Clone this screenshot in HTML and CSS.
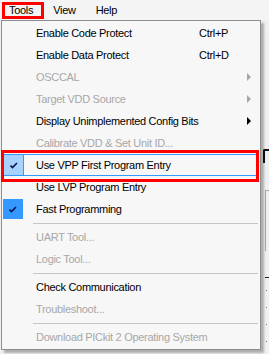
FILE: index.html
```html
<html>
    <head>
        <link rel="stylesheet" href="styles.css">
    </head>
    <body>
        <div class="behind">
            <div class="bracket"></div>
            <div class="groupBox"></div>
            <div class="rule"></div>
            <div class="dots"></div>
        </div>

        <div class="menuBar">
            <span class="barItem open">Tools</span>
            <span class="barItem">View</span>
            <span class="barItem">Help</span>
        </div>

        <div class="dropDown">
            <div class="item">
                <span class="check"></span>
                <span class="label">Enable Code Protect</span>
                <span class="keys">Ctrl+P</span>
                <span></span>
            </div>
            <div class="item">
                <span class="check"></span>
                <span class="label">Enable Data Protect</span>
                <span class="keys">Ctrl+D</span>
                <span></span>
            </div>
            <div class="item disabled">
                <span class="check"></span>
                <span class="label">OSCCAL</span>
                <span class="keys"></span>
                <span class="arrow"></span>
            </div>
            <div class="item disabled">
                <span class="check"></span>
                <span class="label">Target VDD Source</span>
                <span class="keys"></span>
                <span class="arrow"></span>
            </div>
            <div class="item">
                <span class="check"></span>
                <span class="label">Display Unimplemented Config Bits</span>
                <span class="keys"></span>
                <span class="arrow"></span>
            </div>
            <div class="item disabled">
                <span class="check"></span>
                <span class="label">Calibrate VDD &amp; Set Unit ID...</span>
                <span class="keys"></span>
                <span></span>
            </div>
            <div class="item hover marked">
                <span class="check checked">
                    <svg width="8" height="7" viewBox="0 0 8 7"><path d="M0.5 3.5 L2.5 5.5 L7 1" fill="none" stroke="#10104a" stroke-width="1.6"/></svg>
                </span>
                <span class="label">Use VPP First Program Entry</span>
                <span class="keys"></span>
                <span></span>
            </div>
            <div class="item">
                <span class="check"></span>
                <span class="label">Use LVP Program Entry</span>
                <span class="keys"></span>
                <span></span>
            </div>
            <div class="item">
                <span class="check checked">
                    <svg width="8" height="7" viewBox="0 0 8 7"><path d="M0.5 3.5 L2.5 5.5 L7 1" fill="none" stroke="#10104a" stroke-width="1.6"/></svg>
                </span>
                <span class="label">Fast Programming</span>
                <span class="keys"></span>
                <span></span>
            </div>
            <div class="separator"></div>
            <div class="item disabled">
                <span class="check"></span>
                <span class="label">UART Tool...</span>
                <span class="keys"></span>
                <span></span>
            </div>
            <div class="item disabled">
                <span class="check"></span>
                <span class="label">Logic Tool...</span>
                <span class="keys"></span>
                <span></span>
            </div>
            <div class="separator"></div>
            <div class="item">
                <span class="check"></span>
                <span class="label">Check Communication</span>
                <span class="keys"></span>
                <span></span>
            </div>
            <div class="item disabled">
                <span class="check"></span>
                <span class="label">Troubleshoot...</span>
                <span class="keys"></span>
                <span></span>
            </div>
            <div class="separator"></div>
            <div class="item disabled">
                <span class="check"></span>
                <span class="label">Download PICkit 2 Operating System</span>
                <span class="keys"></span>
                <span></span>
            </div>
        </div>
    </body>
</html>
```

FILE: styles.css
```css
body {
    margin: 0;
    width: 269px;
    height: 354px;
    overflow: hidden;
    position: relative;
    background: #f0f0f0;
    font-family: "Liberation Sans", Arial, sans-serif;
    font-size: 11px;
    letter-spacing: -0.3px;
    color: #000;
}

/* window content peeking out on the right */
.behind > div {
    position: absolute;
}
.bracket {
    left: 263px;
    top: 149px;
    width: 8px;
    height: 12px;
    border-left: 2px solid #111;
    border-top: 2px solid #111;
    border-radius: 2px 0 0 0;
}
.groupBox {
    left: 265px;
    top: 190px;
    width: 8px;
    height: 60px;
    border-left: 1px solid #a8a8a8;
    border-top: 1px solid #a8a8a8;
}
.rule {
    left: 265px;
    top: 277px;
    width: 6px;
    height: 1px;
    background: #222;
}
.dots {
    left: 266px;
    top: 290px;
    width: 1px;
    height: 55px;
    background: repeating-linear-gradient(#777 0 1px, transparent 1px 17px);
}

/* menu bar */
.menuBar {
    height: 20px;
    display: flex;
    align-items: center;
    background: #f4f4f4;
}
.barItem {
    line-height: 17px;
}
.barItem.open {
    margin-left: 2px;
    padding: 0 8px 0 4px;
    border: 3px solid #ff0000;
    line-height: 11px;
    height: 11px;
    margin-top: 1px;
}
.barItem.open + .barItem {
    margin-left: 9px;
    margin-right: 20px;
}

/* drop down */
.dropDown {
    position: relative;
    margin-left: 1px;
    width: 258px;
    padding: 1px 0;
    background: #f7f7f7;
    border: 1px solid #8e8e8e;
    box-shadow: 3px 3px 2px rgba(0, 0, 0, 0.28);
    background-image: repeating-linear-gradient(#fbfbfb 0 1px, #f3f3f3 1px 2px);
    background-size: 6px 100%;
    background-position: 19px 0;
    background-repeat: no-repeat;
}
.item {
    height: 22px;
    margin: 0 2px 0 1px;
    display: grid;
    grid-template-columns: 33px 163px 1fr 14px;
    align-items: center;
    box-sizing: border-box;
}
.item .label {
    white-space: nowrap;
}
.item.disabled {
    color: #a7a7a7;
}
.check {
    width: 20px;
    height: 20px;
    display: flex;
    align-items: center;
    justify-content: center;
    box-sizing: border-box;
}
.check.checked {
    background: #3399ff;
}
.arrow {
    width: 0;
    height: 0;
    border-left: 4px solid #000;
    border-top: 4px solid transparent;
    border-bottom: 4px solid transparent;
    margin-left: 3px;
}
.disabled .arrow {
    border-left-color: #a7a7a7;
}
.item.hover {
    border: 1px solid #3399ff;
    grid-template-columns: 32px 163px 1fr 13px;
}
.item.hover .check {
    background: #a6d2ff;
    border-right: 1px solid #3399ff;
}
.item.marked {
    position: relative;
}
.item.marked::after {
    content: "";
    position: absolute;
    left: -3px;
    top: -5px;
    width: 252px;
    height: 26px;
    border: 3px solid #ff0000;
}
.separator {
    height: 6px;
    margin: 0 2px 0 31px;
    background: linear-gradient(#c5c5c5, #c5c5c5) no-repeat 0 3px / 100% 1px;
}
```
